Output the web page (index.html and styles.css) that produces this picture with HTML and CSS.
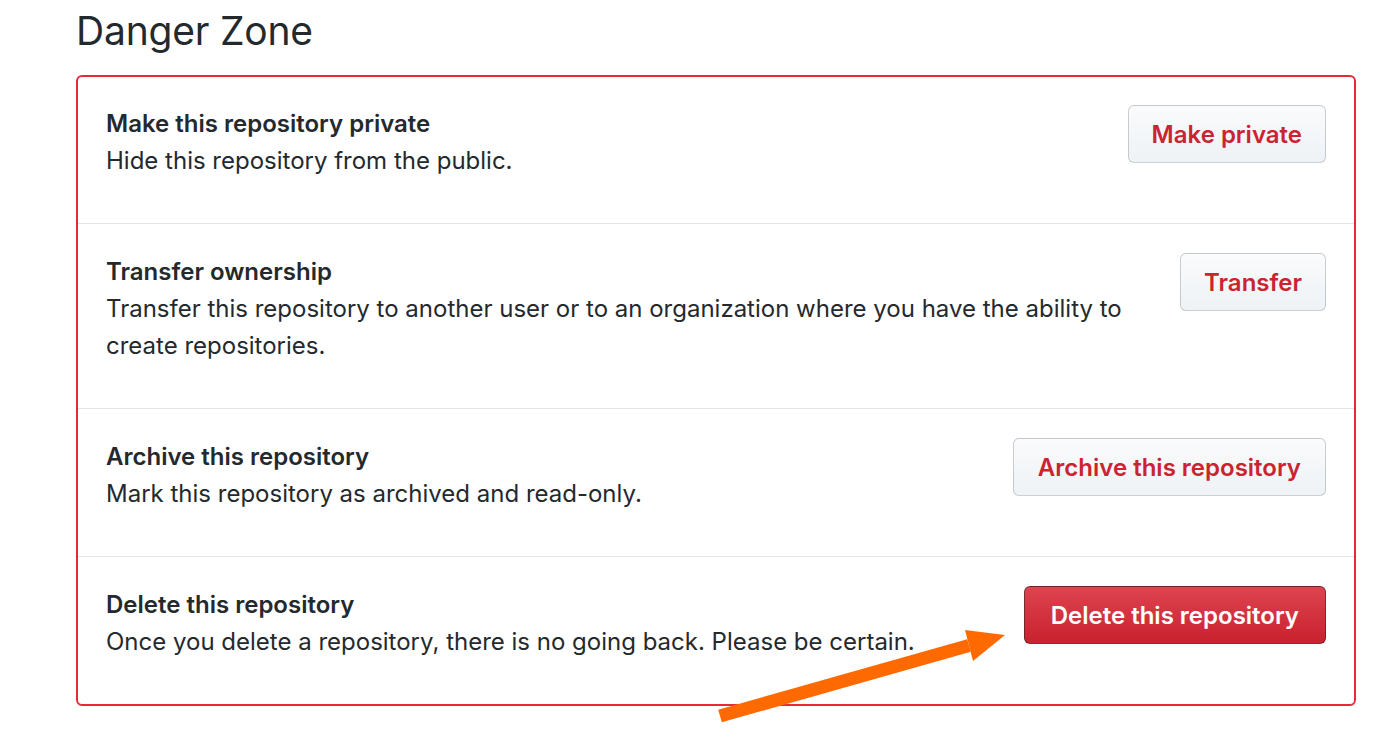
FILE: index.html
```html
<!DOCTYPE html>
<html>
<head>
<meta charset="utf-8">
<link rel="stylesheet" href="styles.css">
</head>
<body>
<div class="page">
  <h2 class="heading">Danger Zone</h2>
  <div class="box">
    <div class="row">
      <div class="text">
        <div class="title">Make this repository private</div>
        <div class="desc">Hide this repository from the public.</div>
      </div>
      <button class="btn">Make private</button>
    </div>
    <div class="row">
      <div class="text">
        <div class="title">Transfer ownership</div>
        <div class="desc">Transfer this repository to another user or to an organization where you have the ability to create repositories.</div>
      </div>
      <button class="btn">Transfer</button>
    </div>
    <div class="row">
      <div class="text">
        <div class="title">Archive this repository</div>
        <div class="desc">Mark this repository as archived and read-only.</div>
      </div>
      <button class="btn btn-wide">Archive this repository</button>
    </div>
    <div class="row">
      <div class="text">
        <div class="title">Delete this repository</div>
        <div class="desc">Once you delete a repository, there is no going back. Please be certain.</div>
      </div>
      <button class="btn btn-danger">Delete this repository</button>
    </div>
  </div>
</div>
<svg class="arrow" width="1400" height="746" viewBox="0 0 1400 746">
  <polygon points="718.2,709.7 721.8,722.3 970.8,651.8 967.2,639.2" fill="#ff6a00"/>
  <polygon points="965,630 1005,635 973,661" fill="#ff6a00"/>
</svg>
</body>
</html>
```

FILE: styles.css
```css
html, body {
  margin: 0;
  padding: 0;
  background: #ffffff;
}
body {
  font-family: Inter, "Liberation Sans", sans-serif;
  color: #24292e;
  width: 1400px;
  height: 746px;
  overflow: hidden;
  position: relative;
}
.page {
  padding-left: 76px;
  width: 1280px;
}
.heading {
  margin: 0;
  padding-top: 7px;
  font-size: 39px;
  font-weight: 400;
  line-height: 48px;
  margin-bottom: 20px;
  letter-spacing: -0.2px;
}
.box {
  border: 2px solid #e8293b;
  border-radius: 6px;
}
.row {
  display: flex;
  justify-content: space-between;
  align-items: flex-start;
  gap: 30px;
  padding: 28px 28px 44px 28px;
}
.row + .row {
  padding-top: 29px;
  border-top: 1px solid #e1e4e8;
}
.text {
  flex: 1;
  font-size: 24px;
  line-height: 37px;
}
.title {
  font-weight: 600;
}
.btn {
  flex: none;
  height: 58px;
  padding: 0 23px;
  font-family: Inter, "Liberation Sans", sans-serif;
  font-size: 24px;
  font-weight: 600;
  color: #cb2431;
  background: linear-gradient(#fafbfc, #eff3f6 90%);
  border: 1px solid rgba(27, 31, 35, 0.2);
  border-radius: 6px;
}
.btn-wide {
  padding: 0 24px;
}
.btn-danger {
  padding: 0 26px;
  color: #ffffff;
  background: linear-gradient(#de4450, #cb2431 90%);
  border-color: rgba(27, 31, 35, 0.5);
}
.arrow {
  position: absolute;
  left: 0;
  top: 0;
  pointer-events: none;
}
```
